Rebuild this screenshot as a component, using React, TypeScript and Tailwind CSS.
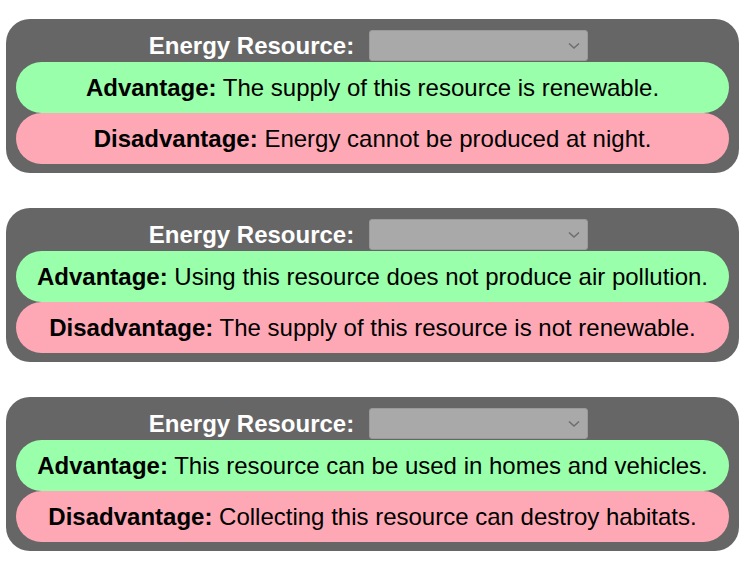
const cards = [
  {
    adv: "The supply of this resource is renewable.",
    dis: "Energy cannot be produced at night.",
  },
  {
    adv: "Using this resource does not produce air pollution.",
    dis: "The supply of this resource is not renewable.",
  },
  {
    adv: "This resource can be used in homes and vehicles.",
    dis: "Collecting this resource can destroy habitats.",
  },
];

const ResourceCard = ({ adv, dis }: { adv: string; dis: string }) => (
  <div className="bg-[#666666] rounded-[24px] px-[10px] pb-[9px]">
    <div className="h-[43px] flex items-center justify-center pr-[8px] pt-[11px] pb-[1px]">
      <span className="text-white font-bold text-[24px] leading-none mr-[15px]">
        Energy Resource:
      </span>
      <div className="w-[219px] h-[31px] bg-[#a9a9a9] border border-[#9a9a9a] rounded-[3px] flex items-center justify-end pr-[7px]">
        <svg width="12" height="8" viewBox="0 0 12 8">
          <path d="M1 1.5 L6 6 L11 1.5" fill="none" stroke="#6e6e6e" strokeWidth="1.6" />
        </svg>
      </div>
    </div>
    <div className="h-[51px] rounded-full bg-[#99ffaa] flex items-center justify-center text-[24px] text-black">
      <span>
        <b>Advantage:</b> {adv}
      </span>
    </div>
    <div className="h-[51px] rounded-full bg-[#ffa8b5] flex items-center justify-center text-[24px] text-black">
      <span>
        <b>Disadvantage:</b> {dis}
      </span>
    </div>
  </div>
);

export default function App() {
  return (
    <div
      className="w-[751px] h-[572px] bg-white pt-[19px] pl-[6px] pr-[12px] flex flex-col gap-[35px]"
      style={{ fontFamily: '"Liberation Sans", Arial, sans-serif' }}
    >
      {cards.map((c, i) => (
        <ResourceCard key={i} adv={c.adv} dis={c.dis} />
      ))}
    </div>
  );
}
